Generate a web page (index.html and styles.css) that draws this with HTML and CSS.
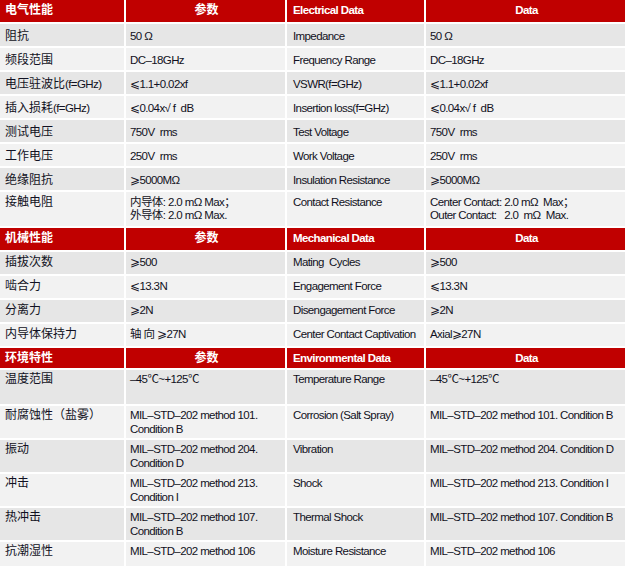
FILE: index.html
```html
<!DOCTYPE html>
<html lang="zh">
<head>
<meta charset="utf-8">
<title>Specifications</title>
<link rel="stylesheet" href="styles.css">
</head>
<body>
<div class="spec">
  <div class="row head">
    <div class="c zh">电气性能</div><div class="c zh ctr">参数</div><div class="c">Electrical Data</div><div class="c ctr">Data</div>
  </div>
  <div class="row dark">
    <div class="c zh">阻抗</div><div class="c">50 Ω</div><div class="c">Impedance</div><div class="c">50 Ω</div>
  </div>
  <div class="row light">
    <div class="c zh">频段范围</div><div class="c">DC–18GHz</div><div class="c">Frequency Range</div><div class="c">DC–18GHz</div>
  </div>
  <div class="row dark">
    <div class="c zh">电压驻波比<span class="lat">(f=GHz)</span></div><div class="c">⩽1.1+0.02xf</div><div class="c">VSWR(f=GHz)</div><div class="c">⩽1.1+0.02xf</div>
  </div>
  <div class="row light">
    <div class="c zh">插入损耗<span class="lat">(f=GHz)</span></div><div class="c">⩽0.04x√ f&nbsp; dB</div><div class="c">Insertion loss(f=GHz)</div><div class="c">⩽0.04x√ f&nbsp; dB</div>
  </div>
  <div class="row dark">
    <div class="c zh">测试电压</div><div class="c">750V&nbsp; rms</div><div class="c">Test Voltage</div><div class="c">750V&nbsp; rms</div>
  </div>
  <div class="row light">
    <div class="c zh">工作电压</div><div class="c">250V&nbsp; rms</div><div class="c">Work Voltage</div><div class="c">250V&nbsp; rms</div>
  </div>
  <div class="row dark">
    <div class="c zh">绝缘阻抗</div><div class="c">⩾5000MΩ</div><div class="c">Insulation Resistance</div><div class="c">⩾5000MΩ</div>
  </div>
  <div class="row light tall">
    <div class="c zh">接触电阻</div><div class="c">内导体: 2.0 mΩ Max；<br>外导体: 2.0 mΩ Max.</div><div class="c">Contact Resistance</div><div class="c">Center Contact: 2.0 mΩ&nbsp; Max；<br>Outer Contact:&nbsp;&nbsp; 2.0&nbsp; mΩ&nbsp; Max.</div>
  </div>

  <div class="row head">
    <div class="c zh">机械性能</div><div class="c zh ctr">参数</div><div class="c">Mechanical Data</div><div class="c ctr">Data</div>
  </div>
  <div class="row dark mech">
    <div class="c zh">插拔次数</div><div class="c">⩾500</div><div class="c">Mating&nbsp; Cycles</div><div class="c">⩾500</div>
  </div>
  <div class="row light mech">
    <div class="c zh">啮合力</div><div class="c">⩽13.3N</div><div class="c">Engagement Force</div><div class="c">⩽13.3N</div>
  </div>
  <div class="row dark mech">
    <div class="c zh">分离力</div><div class="c">⩾2N</div><div class="c">Disengagement Force</div><div class="c">⩾2N</div>
  </div>
  <div class="row light mech">
    <div class="c zh">内导体保持力</div><div class="c">轴 向 ⩾27N</div><div class="c">Center Contact Captivation</div><div class="c">Axial⩾27N</div>
  </div>

  <div class="row head short">
    <div class="c zh">环境特性</div><div class="c zh ctr">参数</div><div class="c">Environmental Data</div><div class="c ctr">Data</div>
  </div>
  <div class="row dark tall env">
    <div class="c zh">温度范围</div><div class="c">–45℃~+125℃</div><div class="c">Temperature Range</div><div class="c">–45℃~+125℃</div>
  </div>
  <div class="row light mid env">
    <div class="c zh">耐腐蚀性（盐雾）</div><div class="c">MIL–STD–202 method 101.<br>Condition B</div><div class="c">Corrosion (Salt Spray)</div><div class="c">MIL–STD–202 method 101. Condition B</div>
  </div>
  <div class="row dark mid env">
    <div class="c zh">振动</div><div class="c">MIL–STD–202 method 204.<br>Condition D</div><div class="c">Vibration</div><div class="c">MIL–STD–202 method 204. Condition D</div>
  </div>
  <div class="row light mid env">
    <div class="c zh">冲击</div><div class="c">MIL–STD–202 method 213.<br>Condition I</div><div class="c">Shock</div><div class="c">MIL–STD–202 method 213. Condition I</div>
  </div>
  <div class="row dark mid env">
    <div class="c zh">热冲击</div><div class="c">MIL–STD–202 method 107.<br>Condition B</div><div class="c">Thermal Shock</div><div class="c">MIL–STD–202 method 107. Condition B</div>
  </div>
  <div class="row light last env">
    <div class="c zh">抗潮湿性</div><div class="c">MIL–STD–202 method 106</div><div class="c">Moisture Resistance</div><div class="c">MIL–STD–202 method 106</div>
  </div>
</div>
</body>
</html>
```

FILE: styles.css
```css
html, body {
  margin: 0;
  padding: 0;
  background: #ffffff;
}

.spec {
  width: 625px;
  display: flex;
  flex-direction: column;
  gap: 2px;
  font-family: "Liberation Sans Narrow", "Arial Narrow", "Liberation Sans", "Noto Sans CJK SC", sans-serif;
  font-size: 11.5px;
  letter-spacing: -0.6px;
  line-height: 14px;
  color: #111122;
}

.row {
  display: grid;
  grid-template-columns: 124px 159px 137px 1fr;
  column-gap: 2px;
  height: 22px;
}

.row.tall { height: 34px; }
.row.mid { height: 32px; }
.row.last { height: 24px; }
.row.short { height: 20px; }

.c {
  padding: 5px 2px 0 4px;
  white-space: nowrap;
  overflow: hidden;
}

.row .c:first-child {
  padding-left: 5px;
}

.row .c:nth-child(3) {
  padding-left: 6px;
}

.tall .c { padding-top: 4px; line-height: 13px; }
.mech .c { padding-top: 3px; }
.env .c { padding-top: 2px; line-height: 14px; }

.zh {
  font-size: 12px;
  letter-spacing: 0;
}

.zh .lat {
  font-size: 11.5px;
  letter-spacing: -0.6px;
}

.dark .c { background: #e6e6e6; }
.light .c { background: #f2f2f2; }

.head .c {
  background: #c00000;
  color: #ffffff;
  font-weight: bold;
  padding-top: 3px;
}

.head .c.ctr {
  text-align: center;
}
```
